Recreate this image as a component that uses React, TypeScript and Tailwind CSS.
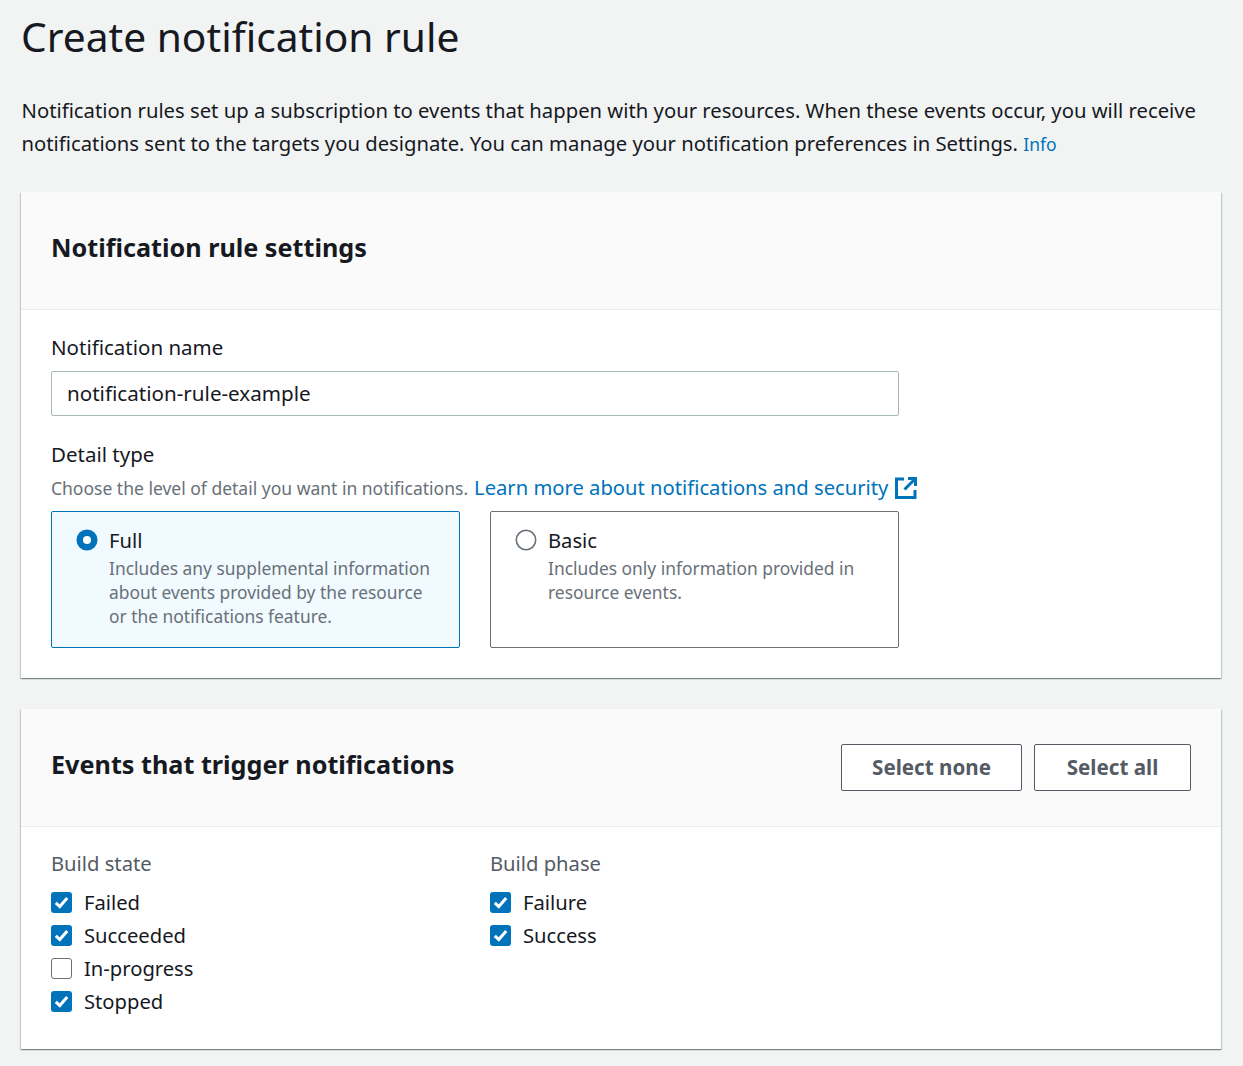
import React from 'react';

const font = "font-['Noto_Sans',sans-serif]";

const Radio: React.FC<{ checked?: boolean }> = ({ checked }) => (
    <svg width="22" height="22" viewBox="0 0 22 22" className="shrink-0">
        {checked ? (
            <>
                <circle cx="11" cy="11" r="10.5" fill="#0073bb" />
                <circle cx="11" cy="11" r="4" fill="#fff" />
            </>
        ) : (
            <circle cx="11" cy="11" r="9.7" fill="#fff" stroke="#687078" strokeWidth="1.6" />
        )}
    </svg>
);

const Check: React.FC<{ label: string; checked?: boolean }> = ({ label, checked = true }) => (
    <div className="flex h-[33px] items-center gap-3">
        {checked ? (
            <div className="flex h-[21px] w-[21px] items-center justify-center rounded-[3px] bg-[#0073bb]">
                <svg width="15" height="13" viewBox="0 0 15 13" fill="none">
                    <path d="M1.8 6.8 L5.8 10.6 L13.2 2" stroke="#fff" strokeWidth="3" />
                </svg>
            </div>
        ) : (
            <div className="h-[21px] w-[21px] rounded-[3px] border-[1.5px] border-[#687078] bg-white" />
        )}
        <span className="text-[20.2px] text-[#16191f]">{label}</span>
    </div>
);

const Option: React.FC<{ title: string; text: string[]; checked?: boolean }> = ({ title, text, checked }) => (
    <div
        className={`flex h-[137px] w-[409px] gap-[11px] rounded-[2px] border px-6 pt-[17px] ${
            checked ? 'border-[#0073bb] bg-[#f1faff]' : 'border-[#687078] bg-white'
        }`}
    >
        <Radio checked={checked} />
        <div>
            <div className="text-[20.2px] leading-[22px] text-[#16191f]">{title}</div>
            <div className="mt-[5px] whitespace-nowrap text-[17.4px] leading-[24px] text-[#687078]">
                {text.map((line) => (
                    <div key={line}>{line}</div>
                ))}
            </div>
        </div>
    </div>
);

export default function App() {
    return (
        <div className={`${font} h-[1066px] overflow-hidden bg-[#f2f3f3] pl-[21px] pr-[22px]`}>
            <h1 className="h-[74px] text-[40.7px] leading-[72px] text-[#16191f]">Create notification rule</h1>
            <p className="mt-[20px] whitespace-nowrap pl-[0.5px] text-[20.25px] leading-[33px] text-[#16191f]">
                Notification rules set up a subscription to events that happen with your resources. When these events occur, you will receive
                <br />
                notifications sent to the targets you designate. You can manage your notification preferences in Settings.{' '}
                <span className="text-[17.5px] text-[#0073bb]">Info</span>
            </p>

            {/* Settings card */}
            <section className="mt-[31px] h-[486px] bg-white shadow-[0_1px_1px_0_rgba(0,28,36,0.3),1px_1px_1px_0_rgba(0,28,36,0.15),-1px_1px_1px_0_rgba(0,28,36,0.15)]">
                <header className="flex h-[118px] items-center border-b border-[#eaeded] bg-[#fafafa] px-[30px] pb-[6px]">
                    <h2 className="text-[25.2px] font-bold text-[#16191f]">Notification rule settings</h2>
                </header>
                <div className="px-[30px] pt-[23px]">
                    <div className="text-[20.5px] leading-[28px] text-[#16191f]">Notification name</div>
                    <div className="mt-[10px] flex h-[45px] w-[848px] items-center rounded-[2px] border border-[#aab7b8] bg-white px-[15px] text-[20.6px] text-[#16191f]">
                        notification-rule-example
                    </div>
                    <div className="mt-[24px] text-[20.5px] leading-[28px] text-[#16191f]">Detail type</div>
                    <div className="mt-[6px] flex h-[28px] items-center whitespace-nowrap">
                        <span className="text-[17.5px] text-[#687078]">Choose the level of detail you want in notifications.</span>
                        <span className="ml-[6px] pb-[2px] text-[20.2px] text-[#0073bb]">Learn more about notifications and security</span>
                        <svg width="22" height="22" viewBox="0 0 22 22" fill="none" className="ml-[7px]">
                            <path d="M9 2H1.5V20.5H20V13" stroke="#0073bb" strokeWidth="3" />
                            <path d="M13 1.5H20.5V9M20 2L9.5 12.5" stroke="#0073bb" strokeWidth="3" />
                        </svg>
                    </div>
                    <div className="mt-[9px] flex gap-[30px]">
                        <Option
                            checked
                            title="Full"
                            text={['Includes any supplemental information', 'about events provided by the resource', 'or the notifications feature.']}
                        />
                        <Option title="Basic" text={['Includes only information provided in', 'resource events.']} />
                    </div>
                </div>
            </section>

            {/* Events card */}
            <section className="mt-[31px] h-[340px] bg-white shadow-[0_1px_1px_0_rgba(0,28,36,0.3),1px_1px_1px_0_rgba(0,28,36,0.15),-1px_1px_1px_0_rgba(0,28,36,0.15)]">
                <header className="relative flex h-[118px] items-center justify-between border-b border-[#eaeded] bg-[#fafafa] pl-[30px] pr-[30px]">
                    <h2 className="pb-[6px] text-[25.2px] font-bold text-[#16191f]">Events that trigger notifications</h2>
                    <div className="flex gap-3">
                        <button className="h-[47px] w-[181px] rounded-[2px] border border-[#545b64] bg-white text-[20.6px] font-bold text-[#545b64]">
                            Select none
                        </button>
                        <button className="h-[47px] w-[157px] rounded-[2px] border border-[#545b64] bg-white text-[20.6px] font-bold text-[#545b64]">
                            Select all
                        </button>
                    </div>
                </header>
                <div className="flex px-[30px] pt-[22px]">
                    <div className="w-[439px]">
                        <div className="mb-[9px] text-[20.2px] leading-[28px] text-[#545b64]">Build state</div>
                        <Check label="Failed" />
                        <Check label="Succeeded" />
                        <Check label="In-progress" checked={false} />
                        <Check label="Stopped" />
                    </div>
                    <div>
                        <div className="mb-[9px] text-[20.2px] leading-[28px] text-[#545b64]">Build phase</div>
                        <Check label="Failure" />
                        <Check label="Success" />
                    </div>
                </div>
            </section>
        </div>
    );
}
